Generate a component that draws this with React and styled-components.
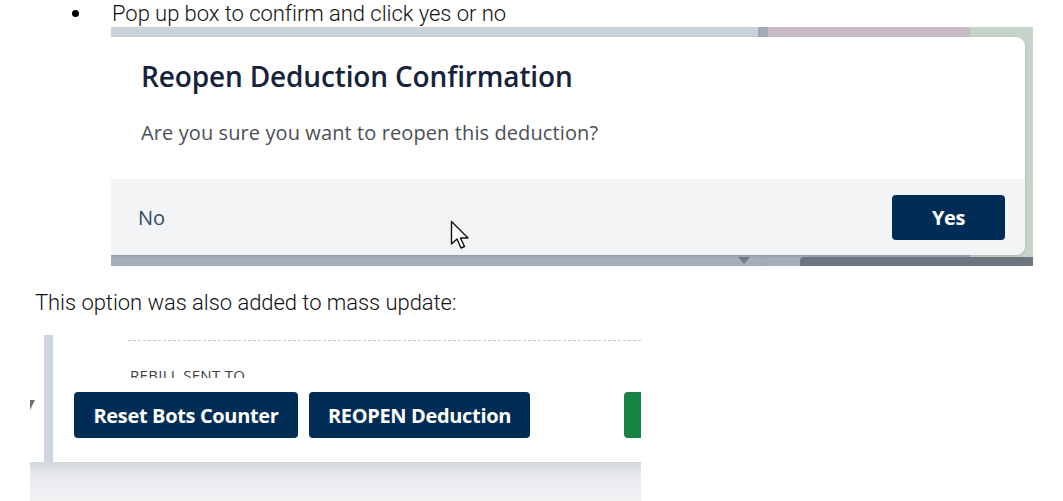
import React from "react";
import styled, { createGlobalStyle } from "styled-components";

const Global = createGlobalStyle`
  html, body {
    margin: 0;
    padding: 0;
    background: #ffffff;
  }
  body {
    width: 1063px;
    height: 501px;
    overflow: hidden;
  }
`;

const Page = styled.div`
  width: 1063px;
  height: 501px;
  display: flex;
  flex-direction: column;
  font-family: "Open Sans", "Noto Sans", sans-serif;
`;

const DocLine = styled.div`
  display: flex;
  align-items: center;
  height: 26px;
  padding-left: ${(p) => p.indent}px;
  margin-top: ${(p) => p.top || 0}px;
  font-family: Roboto, "Liberation Sans", sans-serif;
  font-weight: 300;
  font-size: 22px;
  letter-spacing: -0.05px;
  color: #111;
`;

const Bullet = styled.span`
  width: 7px;
  height: 7px;
  border-radius: 50%;
  background: #000;
  margin-right: 33px;
`;

/* ---------- first screenshot: the dialog ---------- */

const Shot = styled.div`
  position: relative;
  display: flex;
  flex-direction: column;
  margin-left: ${(p) => p.left}px;
  margin-top: ${(p) => p.top || 0}px;
  width: ${(p) => p.w}px;
  height: ${(p) => p.h}px;
  overflow: hidden;
  flex: none;
`;

const Backdrop = styled.div`
  display: flex;
  height: 100%;
`;

const BackCol = styled.div`
  width: ${(p) => p.w}px;
  flex: ${(p) => (p.w ? "none" : 1)};
  background: ${(p) => p.bg};
  display: flex;
  flex-direction: column;
  justify-content: flex-end;
  align-items: ${(p) => p.align || "stretch"};
`;

const BottomBar = styled.div`
  height: 9px;
  margin-left: ${(p) => p.offset || 0}px;
  background: #6c7681;
  border-top-left-radius: ${(p) => (p.offset ? 4 : 0)}px;
`;

const Notch = styled.span`
  width: 0;
  height: 0;
  margin: 0 ${(p) => p.right || 0}px 2px 0;
  border-left: 6px solid transparent;
  border-right: 6px solid transparent;
  border-top: 7px solid #6f7a86;
`;

const Modal = styled.div`
  position: absolute;
  left: 0;
  top: 10px;
  width: 914px;
  height: 218px;
  background: #ffffff;
  border-radius: 0 9px 9px 0;
  box-shadow: 0 1px 3px rgba(0, 0, 0, 0.15);
  display: flex;
  flex-direction: column;
  overflow: hidden;
`;

const ModalHead = styled.div`
  flex: 1;
  padding: 22px 30px 0 30px;
`;

const Title = styled.h2`
  margin: 0;
  font-size: 28px;
  line-height: 34px;
  font-weight: 600;
  letter-spacing: -0.15px;
  color: #15243a;
`;

const Message = styled.p`
  margin: 26px 0 0;
  font-size: 20px;
  line-height: 28px;
  letter-spacing: 0.1px;
  color: #4b5057;
`;

const ModalFoot = styled.div`
  height: 76px;
  background: #f3f4f6;
  display: flex;
  align-items: center;
  justify-content: space-between;
  padding: 0 20px 0 27px;
`;

const TextButton = styled.span`
  font-size: 20px;
  color: #2e4a66;
`;

const NavyButton = styled.div`
  flex: none;
  height: ${(p) => p.h || 45}px;
  width: ${(p) => p.w}px;
  box-sizing: border-box;
  background: ${(p) => p.bg || "#002d56"};
  border-radius: 4px;
  display: flex;
  align-items: center;
  justify-content: center;
  color: #ffffff;
  font-size: 20px;
  font-weight: 700;
  letter-spacing: -0.35px;
`;

const Cursor = styled.svg`
  position: absolute;
  left: 339px;
  top: 193px;
`;

/* ---------- second screenshot: mass update ---------- */

const Panel = styled.div`
  display: flex;
  height: 127px;
  flex: none;
  background: #ffffff;
`;

const Gutter = styled.div`
  width: 14px;
  flex: none;
  display: flex;
  align-items: center;
  padding-top: 12px;
  box-sizing: border-box;
`;

const Caret = styled.span`
  width: 0;
  height: 0;
  margin-left: -5px;
  border-left: 5px solid transparent;
  border-right: 5px solid transparent;
  border-top: 10px solid #707070;
`;

const Rail = styled.div`
  width: 9px;
  flex: none;
  background: #cfd5dc;
`;

const PanelBody = styled.div`
  flex: 1;
  min-width: 0;
  overflow: hidden;
  display: flex;
  flex-direction: column;
`;

const Dashed = styled.div`
  margin: 5px 0 0 75px;
  border-top: 1px dashed #c4c9cf;
`;

const FieldLabel = styled.div`
  margin: 25px 0 0 77px;
  height: 12px;
  overflow: hidden;
  font-size: 15px;
  line-height: 18px;
  letter-spacing: 0.3px;
  color: #3c3f44;
`;

const ButtonRow = styled.div`
  display: flex;
  gap: 11px;
  margin: 14px 0 0 21px;
`;

const Spacer = styled.div`
  width: 72px;
  flex: none;
`;

const Shade = styled.div`
  flex: 1;
  background: linear-gradient(to bottom, #d3d8de 0%, #e8eaee 35%, #f1f2f4 100%);
`;

export default function App() {
  return (
    <Page>
      <Global />
      <DocLine indent={72}>
        <Bullet />
        Pop up box to confirm and click yes or no
      </DocLine>

      <Shot left={111} top={1} w={922} h={239}>
        <Backdrop>
          <BackCol
            align="flex-end"
            bg="linear-gradient(to bottom, #cbd1d9 0%, #b7c0ca 60%, #a3adb8 100%)"
          >
            <Notch right={8} />
          </BackCol>
          <BackCol w={10} bg="#a2acb7" />
          <BackCol
            w={202}
            bg="linear-gradient(to bottom, #c9bcc6 0%, #b9b1ba 92%, #a4adb8 92%)"
          >
            <BottomBar offset={32} />
          </BackCol>
          <BackCol w={63} bg="#c6d3c9">
            <BottomBar />
          </BackCol>
        </Backdrop>

        <Modal>
          <ModalHead>
            <Title>Reopen Deduction Confirmation</Title>
            <Message>Are you sure you want to reopen this deduction?</Message>
          </ModalHead>
          <ModalFoot>
            <TextButton>No</TextButton>
            <NavyButton w={113}>Yes</NavyButton>
          </ModalFoot>
        </Modal>

        <Cursor width="22" height="32" viewBox="0 0 22 32">
          <path
            d="M1.5 1.5 L1.5 24 L7 19 L11 28 L14.5 26.5 L10.5 18 L18 18 Z"
            fill="#ffffff"
            stroke="#111111"
            strokeWidth="1.4"
            strokeLinejoin="round"
          />
        </Cursor>
      </Shot>

      <DocLine indent={35} top={23}>
        This option was also added to mass update:
      </DocLine>

      <Shot left={30} top={20} w={611} h={166}>
        <Panel>
          <Gutter>
            <Caret />
          </Gutter>
          <Rail />
          <PanelBody>
            <Dashed />
            <FieldLabel>REBILL SENT TO</FieldLabel>
            <ButtonRow>
              <NavyButton w={224} h={46}>Reset Bots Counter</NavyButton>
              <NavyButton w={221} h={46}>REOPEN Deduction</NavyButton>
              <Spacer />
              <NavyButton w={30} h={46} bg="#198544" />
            </ButtonRow>
          </PanelBody>
        </Panel>
        <Shade />
      </Shot>
    </Page>
  );
}
